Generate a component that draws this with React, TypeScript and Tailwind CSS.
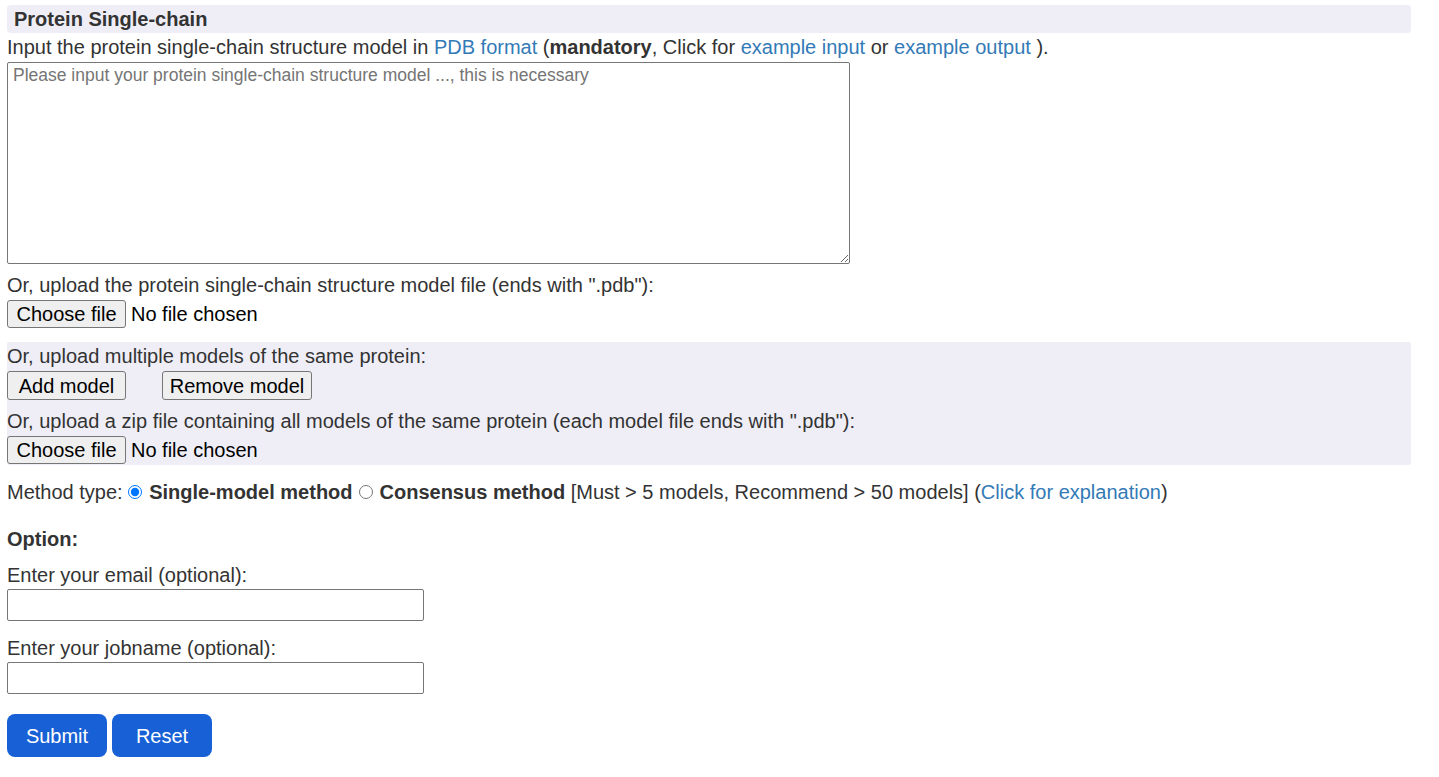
import { useState } from "react";

const FileRow = () => (
  <div className="flex items-center h-[28px]">
    <span className="h-[28px] px-[9px] w-[119px] flex items-center justify-center whitespace-nowrap bg-[#efefef] border border-[#767676] rounded-[3px] text-black">
      Choose file
    </span>
    <span className="ml-[5px] text-black">No file chosen</span>
  </div>
);

const Btn = ({ children, className = "" }: { children: React.ReactNode; className?: string }) => (
  <button
    type="button"
    className={`h-[29px] px-[6px] whitespace-nowrap bg-[#efefef] border border-[#767676] rounded-[3px] text-black leading-none ${className}`}
  >
    {children}
  </button>
);

export default function App() {
  const [method, setMethod] = useState("single");
  const link = "text-[#337ab7]";

  return (
    <div className="min-h-[777px] bg-white text-[#333] text-[20px] font-['Liberation_Sans',Arial,sans-serif]">
      <div className="ml-[7px] w-[1404px] pt-[5px]">
        <div className="h-[28px] px-[7px] flex items-center bg-[#efeef7] rounded-[4px] font-bold">
          Protein Single-chain
        </div>
        <div className="leading-[26px] mt-px">
          Input the protein single-chain structure model in <a className={link}>PDB format</a> (
          <b>mandatory</b>, Click for <a className={link}>example input</a> or{" "}
          <a className={link}>example output</a> ).
        </div>
        <textarea
          className="block mt-[2px] w-[843px] h-[202px] border border-[#767676] rounded-[2px] px-[5px] pt-0 pb-[2px] leading-[24px] text-[17.5px] placeholder:text-[#757575] outline-none"
          placeholder="Please input your protein single-chain structure model ..., this is necessary"
        />
        <div className="leading-[26px] mt-[8px]">
          Or, upload the protein single-chain structure model file (ends with ".pdb"):
        </div>
        <div className="mt-[2px]">
          <FileRow />
        </div>

        <div className="mt-[14px] bg-[#efeef7] rounded-[2px] pb-px">
          <div className="leading-[26px] pt-px">Or, upload multiple models of the same protein:</div>
          <div className="flex gap-[36px] mt-[2px]">
            <Btn className="w-[119px]">Add model</Btn>
            <Btn className="w-[150px]">Remove model</Btn>
          </div>
          <div className="leading-[26px] mt-[8px]">
            Or, upload a zip file containing all models of the same protein (each model file ends with ".pdb"):
          </div>
          <div className="mt-[2px]">
            <FileRow />
          </div>
        </div>

        <div className="leading-[26px] mt-[14px] flex items-center">
          <span>Method type:&nbsp;</span>
          <input
            type="radio"
            name="m"
            checked={method === "single"}
            onChange={() => setMethod("single")}
            className="w-[14px] h-[14px] m-0 mr-[7px] accent-[#0075ff]"
          />
          <b>Single-model method</b>
          <input
            type="radio"
            name="m"
            checked={method === "consensus"}
            onChange={() => setMethod("consensus")}
            className="w-[14px] h-[14px] m-0 ml-[6px] mr-[7px] accent-[#0075ff]"
          />
          <b>Consensus method</b>
          <span>
            &nbsp;[Must &gt; 5 models, Recommend &gt; 50 models] (<a className={link}>Click for explanation</a>)
          </span>
        </div>

        <div className="leading-[26px] mt-[21px] font-bold">Option:</div>
        <div className="leading-[26px] mt-[10px]">Enter your email (optional):</div>
        <input
          type="text"
          className="block mt-px w-[417px] h-[32px] border border-[#767676] rounded-[2px] px-[4px] outline-none"
        />
        <div className="leading-[26px] mt-[14px]">Enter your jobname (optional):</div>
        <input
          type="text"
          className="block mt-px w-[417px] h-[32px] border border-[#767676] rounded-[2px] px-[4px] outline-none"
        />
        <div className="flex gap-[5px] mt-[20px]">
          <button type="button" className="w-[100px] h-[43px] bg-[#1760d5] text-white rounded-[8px]">
            Submit
          </button>
          <button type="button" className="w-[100px] h-[43px] bg-[#1760d5] text-white rounded-[8px]">
            Reset
          </button>
        </div>
      </div>
    </div>
  );
}
